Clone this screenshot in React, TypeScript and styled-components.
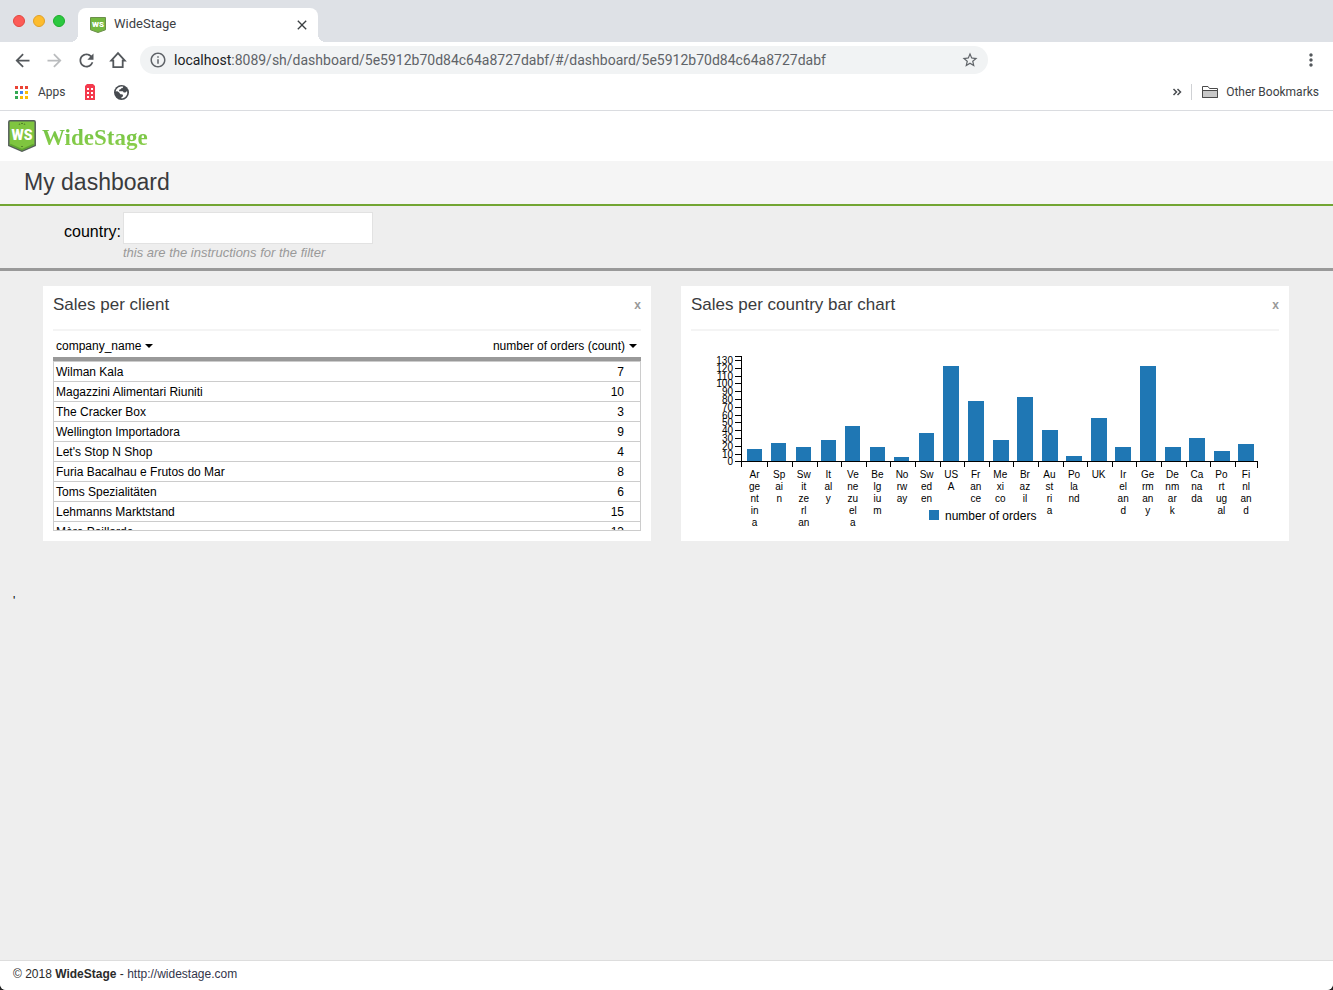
import React from "react";
import styled, { createGlobalStyle } from "styled-components";

const sans = `"Liberation Sans", Arial, sans-serif`;
const chromeFont = `Roboto, Inter, sans-serif`;

const GlobalStyle = createGlobalStyle`
  *, *::before, *::after { box-sizing: border-box; }
  html { background: #222; }
  body { margin: 0; font-family: ${sans}; color: #000; }
  button { border: 0; padding: 0; background: none; font: inherit; color: inherit; cursor: pointer; }
  svg { display: block; }
`;

const Window = styled.div`
  min-height: 100vh;
  display: flex;
  flex-direction: column;
  background: #eee;
  border-radius: 0 0 6px 6px;
  overflow: hidden;
`;

/* ---------- browser frame ---------- */

const TabStrip = styled.div`
  height: 42px;
  display: flex;
  align-items: flex-end;
  background: #dee1e6;
`;

const WindowControls = styled.div`
  width: 70px;
  height: 42px;
  padding-left: 13px;
  display: flex;
  align-items: center;
  gap: 8px;
`;

const ControlDot = styled.button<{ $color: string; $edge: string }>`
  width: 12px;
  height: 12px;
  border-radius: 50%;
  border: 1px solid ${(p) => p.$edge};
  background: ${(p) => p.$color};
`;

const TabFlare = styled.span<{ $side: "left" | "right" }>`
  width: 8px;
  height: 8px;
  background: radial-gradient(circle at ${(p) => p.$side} top, transparent 8px, #fff 8px);
`;

const Tab = styled.div`
  width: 240px;
  height: 34px;
  padding: 0 8px 0 12px;
  display: flex;
  align-items: center;
  gap: 8px;
  border-radius: 8px 8px 0 0;
  background: #fff;
  font: 12px ${chromeFont};
  color: #3c4043;
`;

const TabTitle = styled.span`
  flex: 1;
  font-size: 13px;
  line-height: 16px;
  padding-bottom: 2px;
`;

const Toolbar = styled.div`
  height: 36px;
  padding: 0 12px 0 6px;
  display: flex;
  align-items: center;
  background: #fff;
`;

const ToolButton = styled.button<{ $muted?: boolean }>`
  width: 32px;
  height: 28px;
  display: flex;
  align-items: center;
  justify-content: center;
  color: ${(p) => (p.$muted ? "#babcbe" : "#54585c")};
`;

const MenuButton = styled(ToolButton)`
  width: 20px;
`;

const AddressBar = styled.div`
  flex: 1;
  min-width: 0;
  height: 28px;
  margin: 0 313px 0 6px;
  padding: 0 9px;
  display: flex;
  align-items: center;
  gap: 7px;
  border-radius: 14px;
  background: #f1f3f4;
  color: #5f6368;
`;

const Url = styled.span`
  flex: 1;
  overflow: hidden;
  white-space: nowrap;
  font: 14px Roboto, sans-serif;
`;

const UrlHost = styled.span`
  color: #202124;
`;

const BookmarksBar = styled.div`
  height: 33px;
  padding: 0 14px 4px;
  display: flex;
  align-items: center;
  border-bottom: 1px solid #dadce0;
  background: #fff;
  font: 12px ${chromeFont};
  color: #3c4043;
`;

const Bookmark = styled.button`
  display: flex;
  align-items: center;
  gap: 9px;
  margin-right: 18px;
`;

const OtherBookmarks = styled(Bookmark)`
  margin: 0;
  padding-left: 10px;
  height: 16px;
  border-left: 1px solid #cfd1d4;
  gap: 8px;
`;

const Overflow = styled.button`
  margin-left: auto;
  padding-right: 9px;
`;

/* ---------- page ---------- */

const SiteHeader = styled.header`
  height: 50px;
  padding: 0 8px;
  display: flex;
  align-items: center;
  gap: 6px;
  background: #fff;
`;

const Wordmark = styled.span`
  font: bold 23px/26px "Liberation Serif", serif;
  padding-top: 4px;
  background: linear-gradient(#6abf45, #8fd04a);
  background-clip: text;
  -webkit-background-clip: text;
  color: transparent;
`;

const TitleBar = styled.div`
  height: 45px;
  padding: 0 24px;
  border-bottom: 2px solid #72a533;
  background: #f5f5f5;
`;

const PageTitle = styled.h1`
  margin: 0;
  font-size: 23px;
  line-height: 43px;
  font-weight: 400;
  color: #3a3b3d;
`;

const FilterBar = styled.section`
  padding: 6px 64px;
  display: grid;
  grid-template-columns: max-content 250px;
  column-gap: 2px;
  border-bottom: 3px solid #999;
`;

const FilterLabel = styled.label`
  font-size: 16px;
  line-height: 40px;
  height: 32px;
`;

const FilterInput = styled.input`
  height: 32px;
  padding: 0 8px;
  border: 1px solid #e2e2e2;
  background: #fff;
  font: 14px ${sans};
`;

const FilterHint = styled.em`
  grid-column: 2;
  font-size: 13px;
  line-height: 18px;
  color: #999;
`;

const Dashboard = styled.main`
  flex: 1;
  padding: 15px 44px 0 43px;
  display: grid;
  grid-template-columns: 1fr 1fr;
  grid-template-rows: auto 1fr;
  column-gap: 30px;
`;

const Card = styled.section`
  min-width: 0;
  height: 255px;
  padding: 0 10px 10px;
  background: #fff;
`;

const CardHeader = styled.div`
  height: 45px;
  padding-bottom: 6px;
  display: flex;
  align-items: center;
  justify-content: space-between;
  border-bottom: 2px solid #f4f4f4;
`;

const CardTitle = styled.h2`
  margin: 0;
  font-size: 17px;
  font-weight: 400;
  color: #3a3b3d;
`;

const CloseButton = styled.button`
  font: bold 12px ${sans};
  color: #999;
`;

const TableViewport = styled.div`
  height: 200px;
  overflow: hidden;
  border-bottom: 1px solid #ccc;
`;

const Table = styled.table`
  width: 100%;
  border-collapse: separate;
  border-spacing: 0;
  font-size: 12px;
  line-height: 18px;
`;

const HeadCell = styled.th<{ $right?: boolean }>`
  height: 30px;
  padding: 0 4px 0 3px;
  border-bottom: 4px solid #999;
  font-weight: 400;
  text-align: ${(p) => (p.$right ? "right" : "left")};
`;

const SortButton = styled.button`
  display: inline-flex;
  align-items: center;
  gap: 4px;
  padding-top: 4px;
`;

const Caret = styled.span`
  border: 4px solid transparent;
  border-top-color: #000;
  border-bottom: 0;
`;

const Cell = styled.td<{ $right?: boolean }>`
  height: 20px;
  padding: ${(p) => (p.$right ? "1px 16px 0 0" : "1px 0 0 2px")};
  border-bottom: 1px solid #ccc;
  border-left: ${(p) => (p.$right ? "0" : "1px solid #ccc")};
  border-right: ${(p) => (p.$right ? "1px solid #ccc" : "0")};
  text-align: ${(p) => (p.$right ? "right" : "left")};

  tr:first-child > & {
    height: 21px;
    border-top: 1px solid #ccc;
  }
`;

const ChartSvg = styled.svg`
  width: 100%;
  height: 200px;
  font-family: ${sans};
  font-size: 10px;
`;

const StrayNote = styled.p`
  grid-column: 1 / -1;
  margin: 50px 0 0 -30px;
  font-size: 12px;
  line-height: 20px;
`;

const Footer = styled.footer`
  height: 30px;
  padding: 0 13px;
  border-top: 1px solid #ddd;
  background: #fff;
  font-size: 12px;
  line-height: 26px;
  color: #2b2b2b;
`;

const FooterLink = styled.a`
  color: #34354a;
  text-decoration: none;
`;

/* ---------- icons ---------- */

const Icon = ({ d, size = 20 }: { d: string; size?: number }) => (
  <svg width={size} height={size} viewBox="0 0 24 24" fill="currentColor" aria-hidden="true">
    <path d={d} />
  </svg>
);

const paths = {
  back: "M20 11H7.83l5.59-5.59L12 4l-8 8 8 8 1.41-1.41L7.83 13H20v-2z",
  forward: "M12 4l-1.41 1.41L16.17 11H4v2h12.17l-5.58 5.59L12 20l8-8z",
  reload:
    "M17.65 6.35C16.2 4.9 14.21 4 12 4c-4.42 0-7.99 3.58-7.99 8s3.57 8 7.99 8c3.73 0 6.84-2.55 7.73-6h-2.08c-.82 2.33-3.04 4-5.65 4-3.31 0-6-2.69-6-6s2.69-6 6-6c1.66 0 3.14.69 4.22 1.78L13 11h7V4l-2.35 2.35z",
  info:
    "M11 7h2v2h-2zm0 4h2v6h-2zm1-9C6.48 2 2 6.48 2 12s4.48 10 10 10 10-4.48 10-10S17.52 2 12 2zm0 18c-4.41 0-8-3.59-8-8s3.59-8 8-8 8 3.59 8 8-3.59 8-8 8z",
  star:
    "M22 9.24l-7.19-.62L12 2 9.19 8.63 2 9.24l5.46 4.73L5.82 21 12 17.27 18.18 21l-1.63-7.03L22 9.24zM12 15.4l-3.76 2.27 1-4.28-3.32-2.88 4.38-.38L12 6.1l1.71 4.04 4.38.38-3.32 2.88 1 4.28L12 15.4z",
  close:
    "M19 6.41L17.59 5 12 10.59 6.41 5 5 6.41 10.59 12 5 17.59 6.41 19 12 13.41 17.59 19 19 17.59 13.41 12z",
  more:
    "M12 8c1.1 0 2-.9 2-2s-.9-2-2-2-2 .9-2 2 .9 2 2 2zm0 2c-1.1 0-2 .9-2 2s.9 2 2 2 2-.9 2-2-.9-2-2-2zm0 6c-1.1 0-2 .9-2 2s.9 2 2 2 2-.9 2-2-.9-2-2-2z",
};

const HomeIcon = () => (
  <svg width="18" height="18" viewBox="0 0 18 18" fill="none" stroke="currentColor" strokeWidth="1.800" aria-hidden="true">
    <path d="M9 2.200L2.200 9.700H4.300V16.200H13.700V9.700H15.800z" />
  </svg>
);

const AppsIcon = () => {
  const colors = ["#ea4335", "#ea4335", "#ea4335", "#34a853", "#4285f4", "#fbbc05", "#34a853", "#fbbc05", "#fbbc05"];
  return (
    <svg width="15" height="15" viewBox="0 0 15 15" aria-hidden="true">
      {colors.map((c, i) => (
        <rect key={i} x={1 + (i % 3) * 5} y={1 + Math.floor(i / 3) * 5} width="3" height="3" fill={c} />
      ))}
    </svg>
  );
};

const TowerIcon = () => (
  <svg width="12" height="16" viewBox="0 0 12 16" aria-hidden="true">
    <path d="M3 0h6l2 2v14H1V2z" fill="#f43b4e" />
    {[4, 8, 12].map((y) => (
      <path key={y} d={`M3 ${y}h2v2H3zM7 ${y}h2v2H7z`} fill="#fff" />
    ))}
  </svg>
);

const GlobeIcon = () => (
  <svg width="15" height="15" viewBox="0 0 14 14" aria-hidden="true">
    <circle cx="7" cy="7" r="7" fill="#474b50" />
    <path
      d="M8.600 1.600c-.2 1-.8 1.400-1.900 1.500-.3 1-.9 1.300-1.900 1.400v1.300h2.800c.9 0 1.300.5 1.400 1.300h1c.9 0 1.200-.3 1.300-1h1c.6 3.500-2 6.400-5.300 6.400v-1.200c1-.1 1.400-.6 1.400-1.500-.1-.8-.6-1.100-1.400-1.200H6c-.7-1.200-1.600-2-2.700-2.800L1.600 6.200C1.900 3.300 5 1 8.600 1.600z"
      fill="#fff"
    />
    <path d="M5.500 8.800c-.8 0-1.300-.4-1.300-1.200L1.700 5.700 1.200 8c.3 2.700 2.600 4.800 5.300 5V11c-.8 0-1-.6-1-1.100z" fill="#474b50" />
  </svg>
);

const FolderIcon = () => (
  <svg width="16" height="14" viewBox="0 0 16 14" fill="#c8c8c8" stroke="#4a4a4a" aria-hidden="true">
    <path d="M.5 12.500v-11h5.500l1.500 2h8v9z" fill="#fff" />
    <path d="M.5 5.500h15v7H.5z" />
  </svg>
);

const ShieldLogo = () => (
  <svg width="28" height="32" viewBox="0 0 28 32" aria-hidden="true">
    <path d="M2 .8h24q1.200 0 1.200 1.200v23.500L14 31.200.8 25.500V2Q.8.8 2 .8z" fill="#7fc53f" stroke="#56605a" strokeWidth="1.500" />
    <path d="M2.200 24.500L14 29.600l11.800-5.100" fill="none" stroke="#5fa52f" strokeWidth="1.500" />
    <path d="M10.500 4.500l1-1 1 1zM13 4l1-1.200L15 4zM15.500 4.500l1-1 1 1zM13 26h2l-1 1z" fill="#34531c" />
    <text x="14" y="20" textAnchor="middle" fill="#fff" fontFamily="Roboto, sans-serif" fontWeight="900" fontSize="14">
      WS
    </text>
  </svg>
);

const Favicon = () => (
  <svg width="16" height="16" viewBox="0 0 16 16" aria-hidden="true">
    <path d="M.5.5h15v12.300L8 15.500.5 12.800z" fill="#74b840" stroke="#6b8f4a" />
    <text x="8" y="10" textAnchor="middle" fill="#fff" fontFamily="Roboto, sans-serif" fontWeight="900" fontSize="8">
      WS
    </text>
  </svg>
);

/* ---------- data ---------- */

const clients: [string, number][] = [
  ["Wilman Kala", 7],
  ["Magazzini Alimentari Riuniti", 10],
  ["The Cracker Box", 3],
  ["Wellington Importadora", 9],
  ["Let's Stop N Shop", 4],
  ["Furia Bacalhau e Frutos do Mar", 8],
  ["Toms Spezialitäten", 6],
  ["Lehmanns Marktstand", 15],
  ["Mère Paillarde", 13],
];

/* Country names, already broken to the width of one band. */
const orders: [string, number][] = [
  ["Ar ge nt in a", 16],
  ["Sp ai n", 23],
  ["Sw it ze rl an", 18],
  ["It al y", 28],
  ["Ve ne zu el a", 46],
  ["Be lg iu m", 19],
  ["No rw ay", 6],
  ["Sw ed en", 37],
  ["US A", 122],
  ["Fr an ce", 77],
  ["Me xi co", 28],
  ["Br az il", 83],
  ["Au st ri a", 40],
  ["Po la nd", 7],
  ["UK", 56],
  ["Ir el an d", 19],
  ["Ge rm an y", 122],
  ["De nm ar k", 18],
  ["Ca na da", 30],
  ["Po rt ug al", 13],
  ["Fi nl an d", 22],
];

/* ---------- bar chart ---------- */

const AXIS_X = 50;
const AXIS_END = 566;
const BASE_Y = 130;
const BAND = (AXIS_END - AXIS_X) / orders.length;

const yFor = (value: number) => Math.round(BASE_Y + 0.4 - value * 0.78);

const BarChart = () => (
  <ChartSvg viewBox="0 0 588 200" preserveAspectRatio="xMidYMin meet" role="img" aria-label="number of orders per country">
    <g stroke="#000" fill="none" shapeRendering="crispEdges">
      <path d={`M${AXIS_X - 6} 25.500H${AXIS_X + 0.5}V${BASE_Y + 0.5}H${AXIS_END + 0.5}v6`} />
      <path d={`M${AXIS_X + 0.5} ${BASE_Y}v6`} />
      {orders.slice(1).map((_, i) => (
        <path key={i} d={`M${Math.floor(52.25 + 24.6 * (i + 1)) + 0.5} ${BASE_Y}v6`} />
      ))}
      {Array.from({ length: 14 }, (_, i) => (
        <path key={i} d={`M${AXIS_X - 6} ${yFor(i * 10) + 0.5}h6`} />
      ))}
    </g>
    <g textAnchor="end">
      {Array.from({ length: 14 }, (_, i) => (
        <text key={i} x={AXIS_X - 8} y={yFor(i * 10) + 4}>
          {i * 10}
        </text>
      ))}
    </g>
    <g fill="#1f77b4" shapeRendering="crispEdges">
      {orders.map(([name, value], i) => (
        <rect
          key={name}
          x={Math.floor(AXIS_X + 6.3 + BAND * i)}
          y={yFor(value)}
          width={i < 8 ? 15 : 16}
          height={BASE_Y - yFor(value)}
        />
      ))}
    </g>
    <g textAnchor="middle">
      {orders.map(([name], i) => (
        <text key={name} y="147">
          {name.split(" ").map((part, line) => (
            <tspan key={line} x={AXIS_X + 13.6 + BAND * i} dy={line ? 12 : 0}>
              {part}
            </tspan>
          ))}
        </text>
      ))}
    </g>
    <rect x="238" y="179" width="10" height="10" fill="#1f77b4" />
    <text x="254" y="189" fontSize="12">
      number of orders
    </text>
  </ChartSvg>
);

/* ---------- app ---------- */

export default function App() {
  return (
    <Window>
      <GlobalStyle />

      <TabStrip>
        <WindowControls>
          <ControlDot $color="#fc5b57" $edge="#e2463f" aria-label="Close window" />
          <ControlDot $color="#fdbc2e" $edge="#e0a028" aria-label="Minimise window" />
          <ControlDot $color="#2bc840" $edge="#1dad2b" aria-label="Zoom window" />
        </WindowControls>
        <TabFlare $side="left" />
        <Tab>
          <Favicon />
          <TabTitle>WideStage</TabTitle>
          <button aria-label="Close tab">
            <Icon d={paths.close} size={16} />
          </button>
        </Tab>
        <TabFlare $side="right" />
      </TabStrip>

      <Toolbar>
        <ToolButton aria-label="Back"><Icon d={paths.back} size={21} /></ToolButton>
        <ToolButton $muted aria-label="Forward"><Icon d={paths.forward} size={21} /></ToolButton>
        <ToolButton aria-label="Reload"><Icon d={paths.reload} size={21} /></ToolButton>
        <ToolButton aria-label="Home"><HomeIcon /></ToolButton>
        <AddressBar>
          <Icon d={paths.info} size={18} />
          <Url>
            <UrlHost>localhost</UrlHost>:8089/sh/dashboard/5e5912b70d84c64a8727dabf/#/dashboard/5e5912b70d84c64a8727dabf
          </Url>
          <button aria-label="Bookmark this page">
            <Icon d={paths.star} size={18} />
          </button>
        </AddressBar>
        <MenuButton aria-label="Menu"><Icon d={paths.more} size={20} /></MenuButton>
      </Toolbar>

      <BookmarksBar>
        <Bookmark><AppsIcon />Apps</Bookmark>
        <Bookmark aria-label="Tower"><TowerIcon /></Bookmark>
        <Bookmark aria-label="Globe"><GlobeIcon /></Bookmark>
        <Overflow aria-label="More bookmarks">
          <svg width="10" height="8" viewBox="0 0 10 8" fill="none" stroke="#4a4d51" strokeWidth="1.500" aria-hidden="true">
            <path d="M1.500 1l3 3-3 3M5.500 1l3 3-3 3" />
          </svg>
        </Overflow>
        <OtherBookmarks><FolderIcon />Other Bookmarks</OtherBookmarks>
      </BookmarksBar>

      <SiteHeader>
        <ShieldLogo />
        <Wordmark>WideStage</Wordmark>
      </SiteHeader>

      <TitleBar>
        <PageTitle>My dashboard</PageTitle>
      </TitleBar>

      <FilterBar>
        <FilterLabel htmlFor="country">country:</FilterLabel>
        <FilterInput id="country" type="text" />
        <FilterHint>this are the instructions for the filter</FilterHint>
      </FilterBar>

      <Dashboard>
        <Card>
          <CardHeader>
            <CardTitle>Sales per client</CardTitle>
            <CloseButton aria-label="Remove Sales per client">x</CloseButton>
          </CardHeader>
          <TableViewport>
            <Table>
              <thead>
                <tr>
                  <HeadCell><SortButton>company_name<Caret /></SortButton></HeadCell>
                  <HeadCell $right><SortButton>number of orders (count)<Caret /></SortButton></HeadCell>
                </tr>
              </thead>
              <tbody>
                {clients.map(([name, count]) => (
                  <tr key={name}>
                    <Cell>{name}</Cell>
                    <Cell $right>{count}</Cell>
                  </tr>
                ))}
              </tbody>
            </Table>
          </TableViewport>
        </Card>

        <Card>
          <CardHeader>
            <CardTitle>Sales per country bar chart</CardTitle>
            <CloseButton aria-label="Remove Sales per country bar chart">x</CloseButton>
          </CardHeader>
          <BarChart />
        </Card>

        <StrayNote>'</StrayNote>
      </Dashboard>

      <Footer>
        © 2018 <strong>WideStage</strong> - <FooterLink href="http://widestage.com">http://widestage.com</FooterLink>
      </Footer>
    </Window>
  );
}
